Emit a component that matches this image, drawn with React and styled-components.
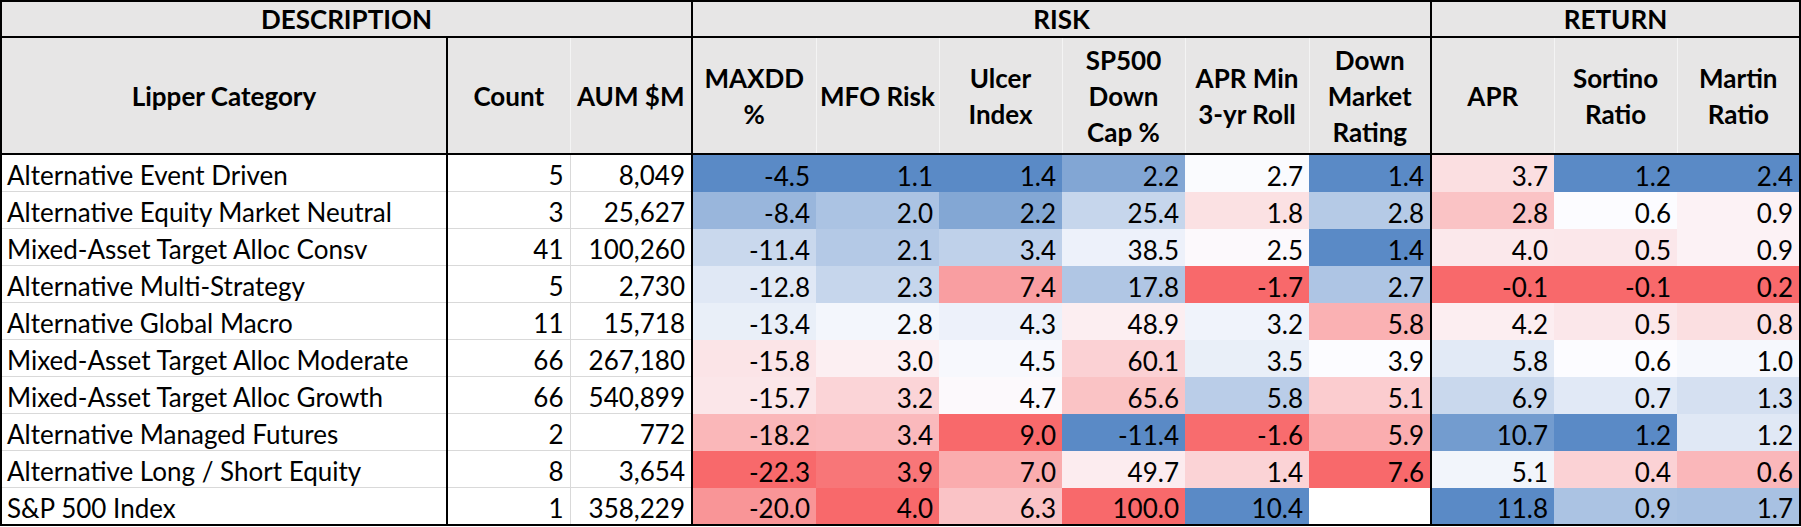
import styled, { createGlobalStyle } from 'styled-components';

const GlobalStyle = createGlobalStyle`
    html, body {
        margin: 0;
        padding: 0;
        background: #ffffff;
    }
    body {
        font-family: Lato, "Liberation Sans", sans-serif;
        color: #000000;
    }
`;

const Table = styled.table`
    border-collapse: collapse;
    table-layout: fixed;
    width: 1799px;
    font-size: 26px;
    border: 2px solid #000;
`;

const Col = styled.col`
    width: ${(p) => p.$w}px;
`;

const GroupHead = styled.th`
    background: #e7e6e6;
    height: 34px;
    padding: 0;
    font-weight: 700;
    line-height: 30px;
    text-align: center;
    border: 2px solid #000;
`;

const ColHead = styled.th`
    background: #e7e6e6;
    height: 115px;
    padding: 0 2px;
    font-weight: 700;
    line-height: 36px;
    text-align: center;
    vertical-align: middle;
    white-space: nowrap;
    border-bottom: 2px solid #000;
    border-left: ${(p) => (p.$thick ? '2px solid #000' : '1px solid #f4f4f4')};
`;

const Cell = styled.td`
    height: 35px;
    padding: 0 6px 1px 5px;
    line-height: 30px;
    vertical-align: bottom;
    white-space: nowrap;
    overflow: hidden;
    text-align: ${(p) => (p.$left ? 'left' : 'right')};
    background: ${(p) => p.$bg || '#ffffff'};
    border-top: ${(p) => (p.$bg ? 'none' : '1px solid #d9d9d9')};
    border-bottom: ${(p) => (p.$bg ? 'none' : '1px solid #d9d9d9')};
    border-left: ${(p) => (p.$thick ? '2px solid #000' : p.$bg ? 'none' : '1px solid #d9d9d9')};
`;

const WIDTHS = [446, 123, 122, 124, 123, 123, 123, 124, 122, 123, 123, 123];

const GROUPS = [
    { label: 'DESCRIPTION', span: 3 },
    { label: 'RISK', span: 6 },
    { label: 'RETURN', span: 3 },
];

const HEADS = [
    ['Lipper Category'],
    ['Count'],
    ['AUM $M'],
    ['MAXDD', '%'],
    ['MFO Risk'],
    ['Ulcer', 'Index'],
    ['SP500', 'Down', 'Cap %'],
    ['APR Min', '3-yr Roll'],
    ['Down', 'Market', 'Rating'],
    ['APR'],
    ['Sortino', 'Ratio'],
    ['Martin', 'Ratio'],
];

// columns that start with a heavy rule
const THICK = [1, 3, 9];

// true = bigger is better (blue at the top end)
const HIGH_GOOD = [true, false, false, false, true, false, true, true, true];

const ROWS = [
    ['Alternative Event Driven', 5, '8,049', -4.5, 1.1, 1.4, 2.2, 2.7, 1.4, 3.7, 1.2, 2.4],
    ['Alternative Equity Market Neutral', 3, '25,627', -8.4, 2.0, 2.2, 25.4, 1.8, 2.8, 2.8, 0.6, 0.9],
    ['Mixed-Asset Target Alloc Consv', 41, '100,260', -11.4, 2.1, 3.4, 38.5, 2.5, 1.4, 4.0, 0.5, 0.9],
    ['Alternative Multi-Strategy', 5, '2,730', -12.8, 2.3, 7.4, 17.8, -1.7, 2.7, -0.1, -0.1, 0.2],
    ['Alternative Global Macro', 11, '15,718', -13.4, 2.8, 4.3, 48.9, 3.2, 5.8, 4.2, 0.5, 0.8],
    ['Mixed-Asset Target Alloc Moderate', 66, '267,180', -15.8, 3.0, 4.5, 60.1, 3.5, 3.9, 5.8, 0.6, 1.0],
    ['Mixed-Asset Target Alloc Growth', 66, '540,899', -15.7, 3.2, 4.7, 65.6, 5.8, 5.1, 6.9, 0.7, 1.3],
    ['Alternative Managed Futures', 2, '772', -18.2, 3.4, 9.0, -11.4, -1.6, 5.9, 10.7, 1.2, 1.2],
    ['Alternative Long / Short Equity', 8, '3,654', -22.3, 3.9, 7.0, 49.7, 1.4, 7.6, 5.1, 0.4, 0.6],
    ['S&P 500 Index', 1, '358,229', -20.0, 4.0, 6.3, 100.0, 10.4, null, 11.8, 0.9, 1.7],
];

const RED = [248, 105, 107];
const WHITE = [252, 252, 255];
const BLUE = [90, 138, 198];

const mix = (a, b, t) => {
    const c = a.map((v, i) => Math.round(v + (b[i] - v) * t));
    return `rgb(${c[0]}, ${c[1]}, ${c[2]})`;
};

// excel style 3-colour scale: min, 50th percentile, max
const scaleFor = (values, highGood) => {
    const list = values.filter((v) => v !== null).sort((a, b) => a - b);
    const rank = 0.5 * (list.length - 1);
    const lo = Math.floor(rank);
    const mid = list[lo] + (list[Math.ceil(rank)] - list[lo]) * (rank - lo);
    const min = list[0];
    const max = list[list.length - 1];
    const lowColor = highGood ? RED : BLUE;
    const highColor = highGood ? BLUE : RED;
    return (v) => {
        if (v === null) return '#ffffff';
        if (v <= mid) return mix(lowColor, WHITE, mid === min ? 1 : (v - min) / (mid - min));
        return mix(WHITE, highColor, max === mid ? 0 : (v - mid) / (max - mid));
    };
};

const SCALES = HIGH_GOOD.map((good, i) => scaleFor(ROWS.map((r) => r[i + 3]), good));

export default function App() {
    return (
        <>
            <GlobalStyle />
            <Table>
                <colgroup>
                    {WIDTHS.map((w, i) => (
                        <Col key={i} $w={w} />
                    ))}
                </colgroup>
                <thead>
                    <tr>
                        {GROUPS.map((g) => (
                            <GroupHead key={g.label} colSpan={g.span}>
                                {g.label}
                            </GroupHead>
                        ))}
                    </tr>
                    <tr>
                        {HEADS.map((lines, i) => (
                            <ColHead key={i} $thick={THICK.includes(i)}>
                                {lines.map((l, j) => (
                                    <div key={j}>{l}</div>
                                ))}
                            </ColHead>
                        ))}
                    </tr>
                </thead>
                <tbody>
                    {ROWS.map((row) => (
                        <tr key={row[0]}>
                            {row.map((v, i) => {
                                if (i < 3) {
                                    return (
                                        <Cell key={i} $left={i === 0} $thick={THICK.includes(i)}>
                                            {v}
                                        </Cell>
                                    );
                                }
                                return (
                                    <Cell key={i} $bg={SCALES[i - 3](v)} $thick={THICK.includes(i)}>
                                        {v === null ? '' : v.toFixed(1)}
                                    </Cell>
                                );
                            })}
                        </tr>
                    ))}
                </tbody>
            </Table>
        </>
    );
}
